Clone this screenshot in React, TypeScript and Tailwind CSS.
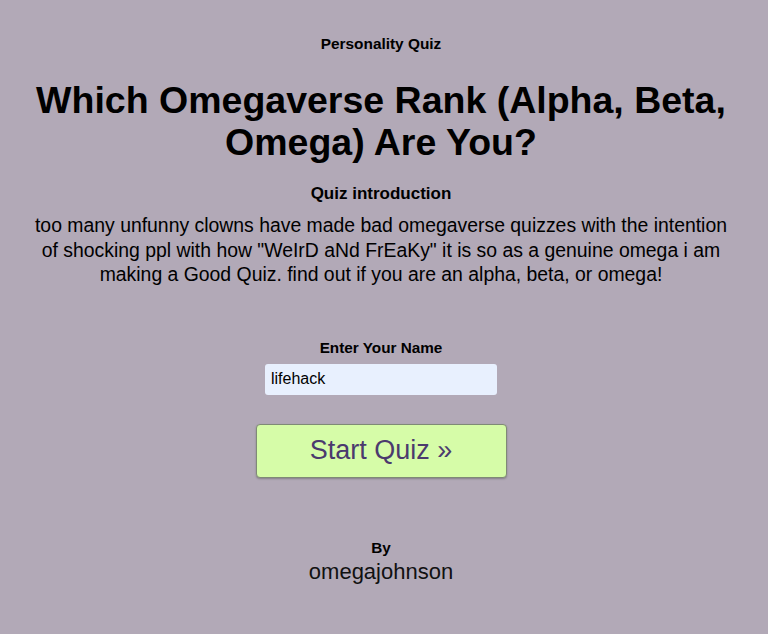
import { useState } from 'react';

export default function App() {
  const [name, setName] = useState('lifehack');

  return (
    <div className="min-h-[634px] bg-[#b2a9b7] text-black font-['Liberation_Sans',Arial,sans-serif] flex flex-col items-center text-center pl-6 pr-[30px]">
      <p className="mt-[35px] text-[15.4px] font-bold leading-[18px]">Personality Quiz</p>

      <h1 className="mt-[26px] text-[37.5px] font-bold leading-[42px] max-w-[720px]">
        Which Omegaverse Rank (Alpha, Beta, Omega) Are You?
      </h1>

      <h2 className="mt-[21px] text-[17px] font-bold leading-[20px]">Quiz introduction</h2>
      <p className="mt-[9px] text-[19.4px] leading-[24.5px] max-w-[700px]">
        too many unfunny clowns have made bad omegaverse quizzes with the intention of shocking ppl
        with how "WeIrD aNd FrEaKy" it is so as a genuine omega i am making a Good Quiz. find out if
        you are an alpha, beta, or omega!
      </p>

      <label htmlFor="player-name" className="mt-[52px] text-[15.3px] font-bold leading-[18px]">
        Enter Your Name
      </label>
      <input
        id="player-name"
        value={name}
        onChange={(e) => setName(e.target.value)}
        className="mt-[7px] w-[232px] h-[31px] rounded-[3px] bg-[#e8f0fe] px-[6px] text-[16px] text-black outline-none"
      />

      <button className="mt-[29px] w-[251px] h-[54px] rounded-[4px] border border-[#7f8a76] bg-[#d6fca8] text-[27px] text-[#4b3a6e] shadow-[0_1px_2px_rgba(0,0,0,0.25)]">
        Start Quiz »
      </button>

      <p className="mt-[61px] text-[15.3px] font-bold leading-[18px]">By</p>
      <p className="mt-[2px] text-[22px] leading-[26px] text-[#111]">omegajohnson</p>
    </div>
  );
}
